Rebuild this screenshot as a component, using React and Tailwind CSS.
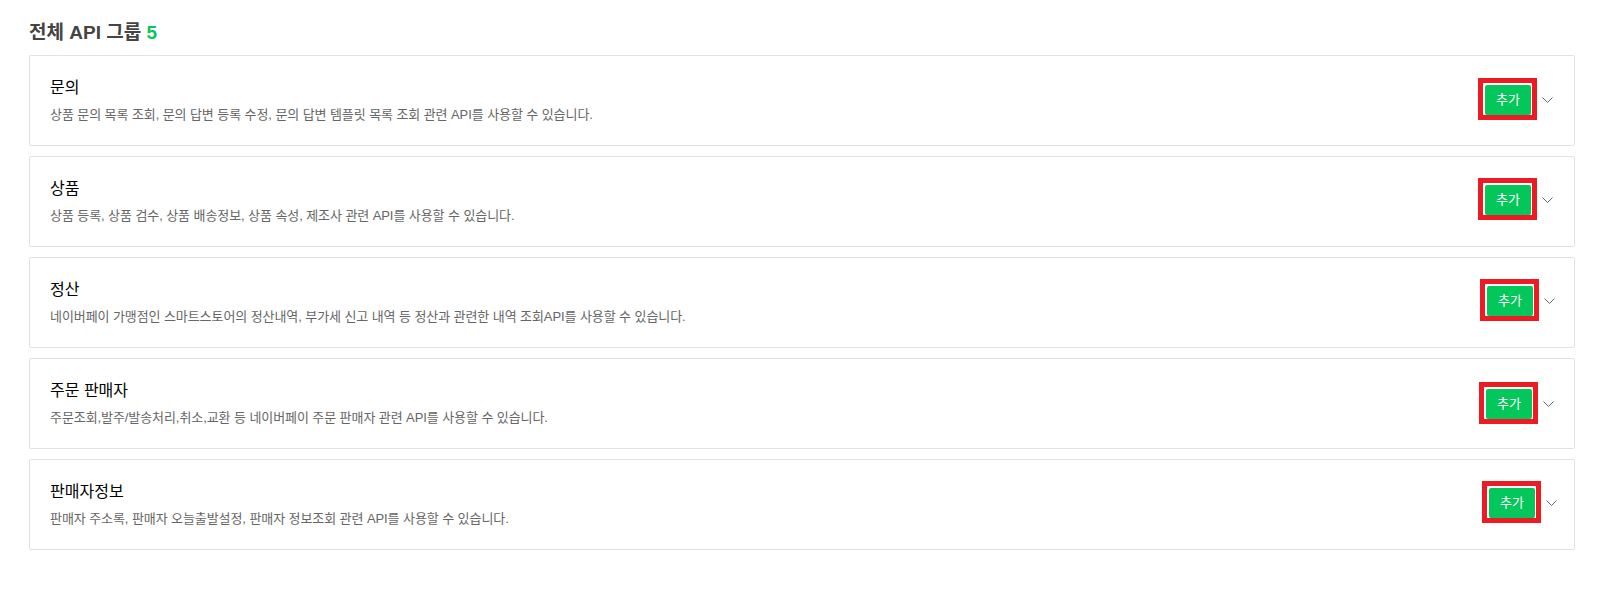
const groups = [
    { title: '문의', desc: '상품 문의 목록 조회, 문의 답변 등록 수정, 문의 답변 템플릿 목록 조회 관련 API를 사용할 수 있습니다.', action: 'mr-[21px] mb-[1px]' },
    { title: '상품', desc: '상품 등록, 상품 검수, 상품 배송정보, 상품 속성, 제조사 관련 API를 사용할 수 있습니다.', action: 'mr-[21px] mb-[3px]' },
    { title: '정산', desc: '네이버페이 가맹점인 스마트스토어의 정산내역, 부가세 신고 내역 등 정산과 관련한 내역 조회API를 사용할 수 있습니다.', action: 'mr-[19px] mb-[3px]' },
    { title: '주문 판매자', desc: '주문조회,발주/발송처리,취소,교환 등 네이버페이 주문 판매자 관련 API를 사용할 수 있습니다.', action: 'mr-[20px] mt-[1px]' },
    { title: '판매자정보', desc: '판매자 주소록, 판매자 오늘출발설정, 판매자 정보조회 관련 API를 사용할 수 있습니다.', action: 'mr-[17px] mb-[3px]' },
];

function Chevron() {
    return (
        <svg className="ml-[11px] h-[6px] w-[11px]" viewBox="0 0 11 6" fill="none">
            <path d="M0.5 0.5L5.5 5.5L10.5 0.5" stroke="#666666" strokeWidth="1" />
        </svg>
    );
}

function GroupCard({ group }) {
    return (
        <div className="flex h-[91px] items-center justify-between rounded-[2px] border border-[#e2e2e2] bg-white pl-5">
            <div>
                <h3 className="text-[16px] leading-[22px] text-black">{group.title}</h3>
                <p className="mt-[7px] text-[13px] leading-[18px] tracking-[-0.08px] text-[#666666]">{group.desc}</p>
            </div>
            <div className={`flex items-center ${group.action}`}>
                <div className="relative">
                    <button className="block h-[30px] w-[46px] rounded-[2px] bg-[#03c75a] text-[13px] text-white">추가</button>
                    {/* red annotation box drawn over the button */}
                    <span className="absolute -left-[7px] -top-[7px] h-[42px] w-[59px] border-[5px] border-[#ed1c24]" />
                </div>
                <Chevron />
            </div>
        </div>
    );
}

export default function App() {
    return (
        <div className="min-h-[593px] bg-white pl-[29px] pr-[25px] pt-[21px] font-['Liberation_Sans','Noto_Sans_CJK_KR',sans-serif]">
            <h2 className="text-[19px] font-bold leading-[24px] text-[#444444]">
                전체 API 그룹 <span className="text-[#03c75a]">5</span>
            </h2>
            <div className="mt-[10px] flex flex-col gap-[10px]">
                {groups.map((group) => (
                    <GroupCard key={group.title} group={group} />
                ))}
            </div>
        </div>
    );
}
